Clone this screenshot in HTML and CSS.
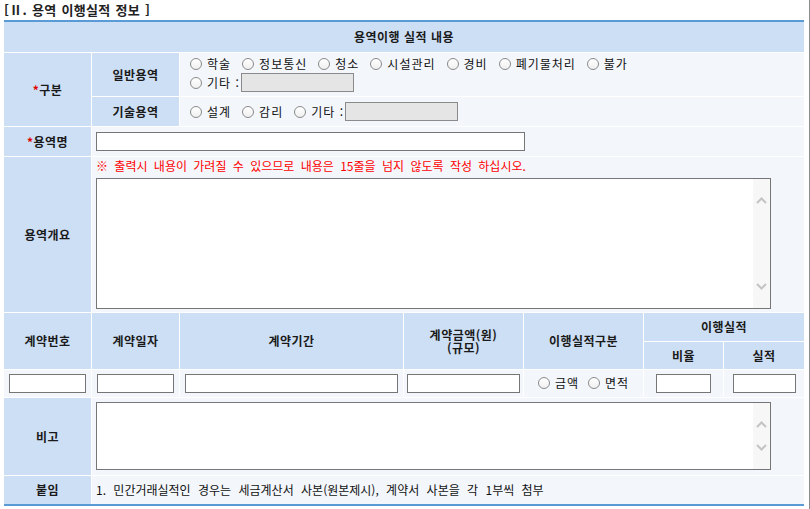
FILE: index.html
```html
<!DOCTYPE html>
<html lang="ko">
<head>
<meta charset="utf-8">
<title>용역 이행실적 정보</title>
<link rel="stylesheet" href="styles.css">
</head>
<body>
<div class="page">
  <h2 class="section-title">[Ⅱ. 용역 이행실적 정보 ]</h2>
  <div class="table-wrap">
    <table class="form-table">
      <colgroup>
        <col class="c1"><col class="c2"><col class="c3"><col class="c4"><col class="c5"><col class="c6"><col class="c7">
      </colgroup>
      <tr class="r-head">
        <th colspan="7" class="lbl">용역이행 실적 내용</th>
      </tr>
      <tr class="r-gen">
        <th rowspan="2" class="lbl"><span class="req">*</span>구분</th>
        <th class="lbl">일반용역</th>
        <td colspan="5" class="val opts-cell">
          <div class="opt-line">
            <label class="opt"><input type="radio" name="gen"><span>학술</span></label>
            <label class="opt"><input type="radio" name="gen"><span>정보통신</span></label>
            <label class="opt"><input type="radio" name="gen"><span>청소</span></label>
            <label class="opt"><input type="radio" name="gen"><span>시설관리</span></label>
            <label class="opt"><input type="radio" name="gen"><span>경비</span></label>
            <label class="opt"><input type="radio" name="gen"><span>폐기물처리</span></label>
            <label class="opt"><input type="radio" name="gen"><span>불가</span></label>
          </div>
          <div class="opt-line">
            <label class="opt"><input type="radio" name="gen"><span>기타 :</span></label><input type="text" class="txt etc" disabled>
          </div>
        </td>
      </tr>
      <tr class="r-tech">
        <th class="lbl">기술용역</th>
        <td colspan="5" class="val opts-cell-one">
          <div class="opt-line">
            <label class="opt"><input type="radio" name="tech"><span>설계</span></label>
            <label class="opt"><input type="radio" name="tech"><span>감리</span></label>
            <label class="opt"><input type="radio" name="tech"><span>기타 :</span></label><input type="text" class="txt etc" disabled>
          </div>
        </td>
      </tr>
      <tr class="r-name">
        <th class="lbl"><span class="req">*</span>용역명</th>
        <td colspan="6" class="val"><input type="text" class="txt name-input"></td>
      </tr>
      <tr class="r-sum">
        <th class="lbl">용역개요</th>
        <td colspan="6" class="val top-cell">
          <div class="notice">※ 출력시 내용이 가려질 수 있으므로 내용은 15줄을 넘지 않도록 작성 하십시오.</div>
          <div class="ta-box ta-big">
            <textarea></textarea>
            <div class="sb">
              <svg class="chev" viewBox="0 0 11 7" width="11" height="7"><polyline points="1,6 5.5,1.5 10,6"/></svg>
              <svg class="chev" viewBox="0 0 11 7" width="11" height="7"><polyline points="1,1 5.5,5.5 10,1"/></svg>
            </div>
          </div>
        </td>
      </tr>
      <tr class="r-ch1">
        <th rowspan="2" class="lbl">계약번호</th>
        <th rowspan="2" class="lbl">계약일자</th>
        <th rowspan="2" class="lbl">계약기간</th>
        <th rowspan="2" class="lbl two-line"><span class="ln">계약금액(원)</span><span class="ln">(규모)</span></th>
        <th rowspan="2" class="lbl">이행실적구분</th>
        <th colspan="2" class="lbl">이행실적</th>
      </tr>
      <tr class="r-ch2">
        <th class="lbl">비율</th>
        <th class="lbl">실적</th>
      </tr>
      <tr class="r-data">
        <td class="val ctr"><input type="text" class="txt w-no"></td>
        <td class="val ctr"><input type="text" class="txt w-date"></td>
        <td class="val ctr"><input type="text" class="txt w-period"></td>
        <td class="val ctr"><input type="text" class="txt w-amount"></td>
        <td class="val ctr">
          <label class="opt opt-sm"><input type="radio" name="kind"><span>금액</span></label><label class="opt opt-last"><input type="radio" name="kind"><span>면적</span></label>
        </td>
        <td class="val ctr"><input type="text" class="txt w-rate"></td>
        <td class="val ctr"><input type="text" class="txt w-perf"></td>
      </tr>
      <tr class="r-note">
        <th class="lbl">비고</th>
        <td colspan="6" class="val top-cell note-cell">
          <div class="ta-box ta-small">
            <textarea></textarea>
            <div class="sb">
              <svg class="chev" viewBox="0 0 11 7" width="11" height="7"><polyline points="1,6 5.5,1.5 10,6"/></svg>
              <svg class="chev" viewBox="0 0 11 7" width="11" height="7"><polyline points="1,1 5.5,5.5 10,1"/></svg>
            </div>
          </div>
        </td>
      </tr>
      <tr class="r-att">
        <th class="lbl">붙임</th>
        <td colspan="6" class="val attach">1. 민간거래실적인 경우는 세금계산서 사본(원본제시), 계약서 사본을 각 1부씩 첨부</td>
      </tr>
    </table>
  </div>
</div>
</body>
</html>
```

FILE: styles.css
```css
* {
  box-sizing: border-box;
}

html,
body {
  margin: 0;
  padding: 0;
  background: #fff;
}

body {
  font-family: "Noto Sans CJK KR", "Noto Sans", sans-serif;
  font-size: 12px;
  color: #111;
}

.page {
  width: 810px;
  height: 509px;
  border-right: 1px solid #8c8c8c;
  overflow: hidden;
}

.section-title {
  margin: 0 0 0 4px;
  height: 20px;
  line-height: 20px;
  font-size: 13px;
  font-weight: bold;
  color: #222;
  word-spacing: 1px;
  letter-spacing: 0.3px;
}

.table-wrap {
  margin-left: 4px;
  width: 800px;
  border-top: 2px solid #5b9bd5;
  border-bottom: 2px solid #5b9bd5;
  overflow: hidden;
}

.form-table {
  border-collapse: separate;
  border-spacing: 1px;
  margin: -1px;
  width: 802px;
  table-layout: fixed;
}

.c1 { width: 87px; }
.c2 { width: 87px; }
.c3 { width: 223px; }
.c4 { width: 119px; }
.c5 { width: 119px; }
.c6 { width: 79px; }
.c7 { width: 80px; }

.form-table th,
.form-table td {
  padding: 0 4px;
  font-size: 12px;
  line-height: 16px;
  vertical-align: middle;
}

.lbl {
  background: #cddff5;
  font-weight: bold;
  text-align: center;
  color: #1a1a1a;
  letter-spacing: 0.5px;
}

.val {
  background: #f3f6fb;
  text-align: left;
  font-weight: normal;
  color: #111;
}

.form-table .ctr {
  text-align: center;
  padding: 0;
}

.r-head { height: 30px; }
.r-gen { height: 43px; }
.r-tech { height: 29px; }
.r-name { height: 29px; }
.r-sum { height: 155px; }
.r-ch1 { height: 28px; }
.r-ch2 { height: 27px; }
.r-data { height: 27px; }
.r-note { height: 77px; }
.r-att { height: 28px; }

.req {
  color: #e00000;
  font-weight: bold;
}

.form-table .opts-cell {
  padding: 1px 4px 3px 10px;
  vertical-align: top;
}

.form-table .opts-cell-one {
  padding-left: 10px;
}

.opt-line {
  display: flex;
  align-items: center;
  height: 19px;
  white-space: nowrap;
}

.opt {
  display: inline-flex;
  align-items: center;
  margin-right: 11px;
  white-space: nowrap;
  letter-spacing: 1px;
}

.opt-line .opt:last-of-type {
  margin-right: 1px;
}

.opt input[type="radio"] {
  appearance: none;
  -webkit-appearance: none;
  width: 12px;
  height: 12px;
  margin: 0 5px 0 0;
  border: 1px solid #8a8a8a;
  border-radius: 50%;
  background: linear-gradient(#ffffff, #f0f0f0);
  flex: none;
}

.opt-sm {
  margin-right: 9px;
}

.opt-last {
  margin-right: 0;
}

.txt {
  height: 19px;
  border: 1px solid #767676;
  background: #fff;
  padding: 0 2px;
  font: inherit;
  vertical-align: middle;
  margin: 0;
}

.txt.etc {
  width: 113px;
  background: #e5e5e5;
  border-color: #8a8a8a;
}

.name-input {
  width: 429px;
}

.w-no { width: 77px; }
.w-date { width: 77px; }
.w-period { width: 213px; }
.w-amount { width: 113px; }
.w-rate { width: 55px; }
.w-perf { width: 63px; }

.form-table .top-cell {
  vertical-align: top;
  padding-top: 0;
}

.form-table .note-cell {
  padding-top: 4px;
}

.notice {
  color: #ff0000;
  line-height: 18px;
  height: 18px;
  white-space: nowrap;
  word-spacing: 3px;
}

.attach {
  word-spacing: 4px;
  white-space: nowrap;
}

.ta-box {
  display: flex;
  width: 675px;
  border: 1px solid #767676;
  background: #fff;
}

.ta-big {
  height: 131px;
  margin-top: 3px;
}

.ta-small {
  height: 68px;
}

.ta-box textarea {
  flex: 1;
  border: 0;
  margin: 0;
  padding: 2px;
  resize: none;
  outline: none;
  font: inherit;
  background: #fff;
  overflow: hidden;
}

.sb {
  width: 17px;
  flex: none;
  background: #f7f7f7;
  display: flex;
  flex-direction: column;
  justify-content: space-between;
  align-items: center;
  padding: 18px 0;
}

.chev polyline {
  fill: none;
  stroke: #c4c4c4;
  stroke-width: 2;
}

.two-line .ln {
  display: block;
  font-size: 12px;
  line-height: 13px;
  height: 13px;
}
```
